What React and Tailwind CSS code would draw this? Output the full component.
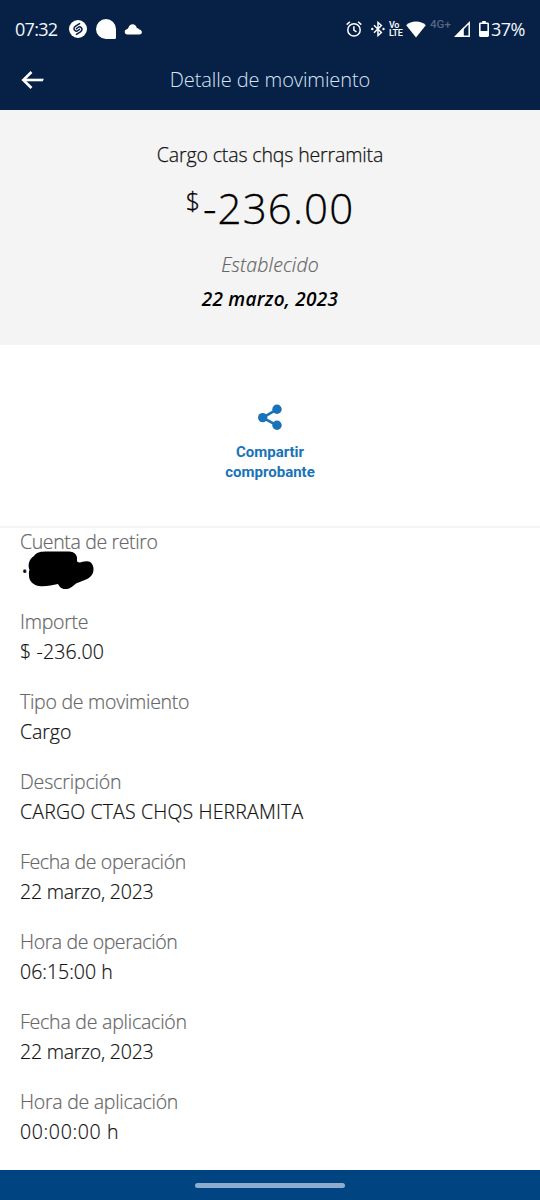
const fields = [
  { label: 'Importe', value: '$ -236.00', labelClass: 'tracking-[-0.25px]', valueClass: 'tracking-[0.15px]' },
  { label: 'Tipo de movimiento', value: 'Cargo', labelClass: 'tracking-[-0.26px]', valueClass: 'tracking-[-0.05px]' },
  { label: 'Descripción', value: 'CARGO CTAS CHQS HERRAMITA', labelClass: 'tracking-[-0.15px]', valueClass: 'tracking-[0.16px]' },
  { label: 'Fecha de operación', value: '22 marzo, 2023', labelClass: 'tracking-[-0.36px]', valueClass: 'tracking-[-0.23px]' },
  { label: 'Hora de operación', value: '06:15:00 h', labelClass: 'tracking-[-0.4px]', valueClass: 'tracking-[0px]' },
  { label: 'Fecha de aplicación', value: '22 marzo, 2023', labelClass: 'tracking-[-0.22px]', valueClass: 'tracking-[-0.23px]' },
  { label: 'Hora de aplicación', value: '00:00:00 h', labelClass: 'tracking-[-0.26px]', valueClass: 'tracking-[0.65px]' },
]

function StatusBar() {
  return (
    <div className="flex h-[58px] items-center justify-between pl-[15px] pr-[15px] font-[Roboto,sans-serif] text-[#f3f6fb]">
      <div className="flex items-center">
        <span className="w-[54px] text-[18px] leading-none tracking-[-0.7px] font-['Open_Sans',sans-serif]">07:32</span>
        <svg className="h-[18px] w-[18px]" viewBox="0 0 18 18" fill="none">
          <circle cx="9" cy="9" r="9" fill="#fff" />
          <path d="M10.6 3.6 6.600 6.200C4.600 7.600 4.600 9.300 5.800 10.400c1.100 1 2.400.8 3.200.1l1.500-1.200" stroke="#072146" strokeWidth="1.5" strokeLinecap="round" />
          <path d="M7.400 14.400 11.400 11.800c2-1.400 2-3.100.8-4.200-1.100-1-2.400-.8-3.200-.1L7.500 8.700" stroke="#072146" strokeWidth="1.5" strokeLinecap="round" />
        </svg>
        <svg className="ml-[9px] h-5 w-5" viewBox="0 0 20 20" fill="#fff">
          <path d="M10 0a10 10 0 0 1 10 10v8.500a1.500 1.500 0 0 1-1.500 1.500H10A10 10 0 0 1 10 0Z" />
        </svg>
        <svg className="ml-2 h-[11px] w-[18px]" viewBox="0 0 18 11" fill="#fff">
          <path d="M3 10.500a2.700 2.700 0 0 1-.3-5.300c.7-.2 1.300-.6 1.700-1.500C5.100 1.600 6.600.3 8.500.3c2.200 0 3.600 1.300 4.300 3.700 1.300.2 1.900.7 2.400 1.600 1.600.3 2.700 1.200 2.700 2.700 0 1.300-1 2.200-2.500 2.200Z" />
        </svg>
      </div>

      <div className="flex items-center">
        <svg className="h-4 w-4" viewBox="0 0 16 16" fill="none" stroke="#fff" strokeWidth="1.5">
          <circle cx="8" cy="8.900" r="6.200" />
          <path d="M7.900 5.200v3.900l2.600 1.700M.7 3.600 3.900.8M15.300 3.600 12.100.8" />
        </svg>
        <svg className="ml-[9px] h-4 w-[14px]" viewBox="0 0 14 16" fill="none" stroke="#fff" strokeWidth="1.500">
          <path d="m3 4.300 7.400 7.200L7 14.500v-13l3.400 3L3 11.700" />
          <circle cx="1.300" cy="8" r="1.200" fill="#fff" stroke="none" />
          <circle cx="12.500" cy="8" r="1.200" fill="#fff" stroke="none" />
        </svg>
        <div className="ml-1 flex w-[16px] flex-col text-[9px] leading-[8px] font-semibold tracking-[-0.3px]">
          <span>Vo</span>
          <span>LTE</span>
        </div>
        <svg className="ml-[1px] h-[17px] w-5" viewBox="0 0 20 17" fill="#fff">
          <path d="M10 16.500.2 4.300C2.700 1.900 6 .6 10 .6s7.300 1.300 9.800 3.700Z" />
        </svg>
        <span className="ml-1 w-[24px] pb-2 text-[11.5px] leading-none font-medium text-[#566783]">4G+</span>
        <svg className="h-4 w-4" viewBox="0 0 16 16">
          <path d="M15.200 1.800v13.400H1.800Z" fill="none" stroke="#fff" strokeWidth="1.500" />
          <path d="M9.800 6v9.500H1Z" fill="#fff" />
        </svg>
        <svg className="ml-[9px] h-4 w-[10px]" viewBox="0 0 10 16">
          <path d="M3.200 0h3.600v2H3.200z" fill="#fff" />
          <rect x=".8" y="2.300" width="8.400" height="12.900" rx=".6" fill="none" stroke="#fff" strokeWidth="1.600" />
          <path d="M1 10h8v5H1z" fill="#fff" />
        </svg>
        <span className="ml-[2px] text-[18px] leading-none font-['Open_Sans',sans-serif] tracking-[-0.5px]">37%</span>
      </div>
    </div>
  )
}

function Header() {
  return (
    <header className="h-[110px] bg-[#072146]">
      <StatusBar />
      <div className="grid h-[43px] grid-cols-[60px_1fr_60px] items-center">
        <svg className="ml-[21px] h-[18px] w-[23px]" viewBox="0 0 23 18" fill="none" stroke="#fff" strokeWidth="2.600">
          <path d="M10.500 1 2.300 9l8.200 8" />
          <path d="M2.500 9h18.300" />
          <path d="M20.500 7.700h2.300l-1 2.600h-1.300z" fill="#fff" stroke="none" />
        </svg>
        <h1 className="text-center text-[20px] leading-[30px] font-light tracking-[-0.08px] text-[#d9e5f5]">Detalle de movimiento</h1>
      </div>
    </header>
  )
}

function Summary() {
  return (
    <section className="flex h-[235px] flex-col items-center bg-[#f4f4f4] pt-[30px]">
      <p className="text-[19.5px] leading-[30px] font-light tracking-[-0.13px] text-[#121212] [-webkit-text-stroke:0.25px]">Cargo ctas chqs herramita</p>
      <p className="mt-[8px] flex h-[60px] items-start font-light text-black [-webkit-text-stroke:0.3px]">
        <span className="mr-[3px] pt-[6px] text-[25px] leading-[32px]">$</span>
        <span className="text-[42px] leading-[60px] tracking-[1.15px]">-236.00</span>
      </p>
      <p className="mt-[12px] text-[19.5px] leading-[30px] font-light tracking-[0.13px] text-[#666] italic [-webkit-text-stroke:0.2px]">Establecido</p>
      <p className="mt-[4px] text-[19px] leading-[30px] font-semibold tracking-[0.27px] text-black italic">22 marzo, 2023</p>
    </section>
  )
}

function Share() {
  return (
    <section className="flex h-[183px] flex-col items-center border-b-2 border-[#f4f4f4] pt-[59px]">
      <button className="flex flex-col items-center text-[#1973b8]">
        <svg className="h-[26px] w-6" viewBox="0 0 24 26" fill="currentColor">
          <path d="M19 5.300 4.700 13.600 19 21.400" fill="none" stroke="currentColor" strokeWidth="2.700" />
          <circle cx="19" cy="5.300" r="4.700" />
          <circle cx="4.700" cy="13.600" r="4.700" />
          <circle cx="19" cy="21.300" r="4.700" />
        </svg>
        <span className="mt-[12px] w-[110px] text-center font-[Roboto,sans-serif] text-[15px] leading-5 font-bold">
          Compartir comprobante
        </span>
      </button>
    </section>
  )
}

function Field({ label, children, labelClass, valueClass = '' }) {
  return (
    <div className="h-20">
      <dt className={`leading-[28px] text-[#666] ${labelClass}`}>{label}</dt>
      <dd className={`leading-[32px] text-[#121212] ${valueClass}`}>{children}</dd>
    </div>
  )
}

export default function App() {
  return (
    <div className="flex h-[1200px] w-[540px] flex-col overflow-hidden bg-white font-['Open_Sans',sans-serif]">
      <Header />
      <Summary />
      <Share />
      <dl className="flex-1 pl-5 text-[19.5px] font-light [-webkit-text-stroke:0.2px]">
        <Field label="Cuenta de retiro" labelClass="tracking-[-0.37px]">
          <span className="relative block">
            <span className="pl-px">•</span>
            <svg className="absolute -top-[5px] left-[7px] h-10 w-[67px]" viewBox="0 0 67 40">
              <path
                d="M7 5C10 1 14 .6 20 .6h22c5 0 8 3 8 6.500 0 2 0 3 .5 4C54 12 55 10.500 60 10.300c4 0 6.500 3.500 6.500 8 0 5-3 8.200-7.500 10.200l-10 4c-4 3.500-6 5.500-11 5.500-4 0-5.500-2.500-7-5-5 .8-10 2.200-16 2.200C8 35.500 2 31 2 25c0-3-.500-4 .500-6C.5 14 2 8 7 5Z"
                fill="#000"
              />
            </svg>
          </span>
        </Field>
        {fields.map((f) => (
          <Field key={f.label} label={f.label} labelClass={f.labelClass} valueClass={f.valueClass}>
            {f.value}
          </Field>
        ))}
      </dl>
      <footer className="flex h-[30px] shrink-0 items-center justify-center bg-[#004481]">
        <div className="h-[5px] w-[150px] rounded-full bg-[#8fabd0]" />
      </footer>
    </div>
  )
}
